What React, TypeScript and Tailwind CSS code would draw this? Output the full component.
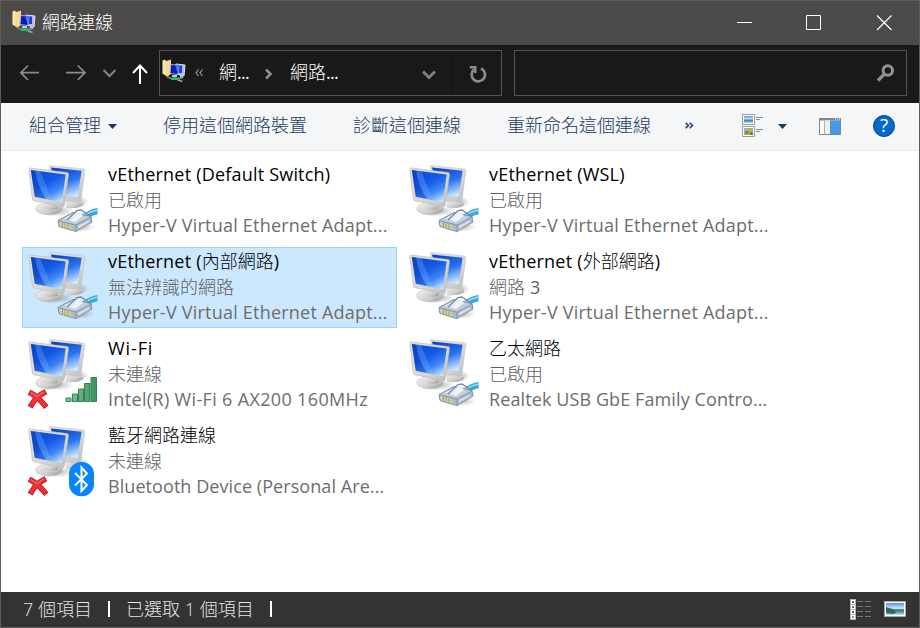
import type { ReactNode } from "react";

type Kind = "ethernet" | "wifi" | "bluetooth";

type Connection = {
  name: ReactNode;
  status: ReactNode;
  device: string;
  spacing: string;
  kind: Kind;
  selected?: boolean;
};

const adapter = "Hyper-V Virtual Ethernet Adapt...";

function Latin({ children, spacing = "tracking-[0.2px]" }: { children: ReactNode; spacing?: string }) {
  return <span className={`font-normal ${spacing}`}>{children}</span>;
}

const connections: Connection[] = [
  { name: <Latin>vEthernet (Default Switch)</Latin>, status: "已啟用", device: adapter, spacing: "tracking-[0.220px]", kind: "ethernet" },
  { name: <Latin>vEthernet (WSL)</Latin>, status: "已啟用", device: adapter, spacing: "tracking-[0.220px]", kind: "ethernet" },
  { name: <><Latin>vEthernet (</Latin>內部網路<Latin>)</Latin></>, status: "無法辨識的網路", device: adapter, spacing: "tracking-[0.220px]", kind: "ethernet", selected: true },
  { name: <><Latin>vEthernet (</Latin>外部網路<Latin>)</Latin></>, status: <>網路<Latin> 3</Latin></>, device: adapter, spacing: "tracking-[0.220px]", kind: "ethernet" },
  { name: <Latin spacing="tracking-[0.900px]">Wi-Fi</Latin>, status: "未連線", device: "Intel(R) Wi-Fi 6 AX200 160MHz", spacing: "tracking-[0.340px]", kind: "wifi" },
  { name: "乙太網路", status: "已啟用", device: "Realtek USB GbE Family Contro...", spacing: "tracking-[0.1px]", kind: "ethernet" },
  { name: "藍牙網路連線", status: "未連線", device: "Bluetooth Device (Personal Are...", spacing: "tracking-[0.070px]", kind: "bluetooth" },
];

function Gradients() {
  return (
    <svg className="absolute h-0 w-0" aria-hidden>
      <defs>
        <linearGradient id="screen" x1="0.2" y1="0" x2="0.8" y2="1">
          <stop offset="0" stopColor="#0d4ad0" />
          <stop offset="0.4" stopColor="#1559e6" />
          <stop offset="0.7" stopColor="#3f86f5" />
          <stop offset="1" stopColor="#c4e4ff" />
        </linearGradient>
        <linearGradient id="screenBack" x1="0.3" y1="0" x2="0.7" y2="1">
          <stop offset="0" stopColor="#0b45cc" />
          <stop offset="0.5" stopColor="#2b72ee" />
          <stop offset="1" stopColor="#d3ecff" />
        </linearGradient>
        <linearGradient id="frame" x1="0" y1="0" x2="1" y2="1">
          <stop offset="0" stopColor="#e2e2dd" />
          <stop offset="0.6" stopColor="#d8d9d6" />
          <stop offset="1" stopColor="#bcbebc" />
        </linearGradient>
        <linearGradient id="base" x1="0" y1="0" x2="1" y2="1">
          <stop offset="0" stopColor="#f4f4f2" />
          <stop offset="0.6" stopColor="#cfcfcd" />
          <stop offset="1" stopColor="#8e8e8e" />
        </linearGradient>
        <linearGradient id="bars" x1="0" y1="0" x2="1" y2="0">
          <stop offset="0" stopColor="#8ccaa0" />
          <stop offset="1" stopColor="#3a9462" />
        </linearGradient>
        <linearGradient id="sky" x1="0" y1="0" x2="0" y2="1">
          <stop offset="0" stopColor="#4e8fea" />
          <stop offset="0.45" stopColor="#d7edf8" />
          <stop offset="0.55" stopColor="#467f68" />
          <stop offset="0.75" stopColor="#5592bb" />
          <stop offset="1" stopColor="#cde8f5" />
        </linearGradient>
        <linearGradient id="folder" x1="0" y1="0" x2="1" y2="0">
          <stop offset="0" stopColor="#fff3b5" />
          <stop offset="1" stopColor="#dfba62" />
        </linearGradient>
        <radialGradient id="shade">
          <stop offset="0" stopColor="#555" stopOpacity="0.45" />
          <stop offset="1" stopColor="#555" stopOpacity="0" />
        </radialGradient>
      </defs>
    </svg>
  );
}

function Monitors() {
  return (
    <>
      <ellipse cx="50" cy="37" rx="12" ry="6" fill="url(#shade)" />
      <ellipse cx="29" cy="46" rx="18" ry="5.5" fill="url(#shade)" />
      <path d="M38 34h14l1 3q4 1 3 3-5 4-17 3z" fill="url(#base)" />
      <path d="M22.5.5 56.200 3.900q1.800.200 1.600 2L53.900 35.600q-.300 1.800-2 1.600L25 34.500z" fill="url(#frame)" stroke="#c4c6c4" strokeWidth=".6" />
      <path d="M24 2.400 54.600 5.800 50.600 32 30 29z" fill="url(#screenBack)" />
      <ellipse cx="22" cy="43.800" rx="13.300" ry="6" fill="url(#base)" stroke="#b5b5b3" strokeWidth=".5" />
      <path d="M15 36.500h17l-1.200 7.200q-7 2.200-14 0z" fill="url(#base)" />
      <path d="M3.200 3 40 7.600q1.700.200 1.500 1.800l-4.300 30.800q-.300 1.800-2 1.500L7.200 35.800q-1.600-.300-1.800-1.800L1.800 4.800q-.200-1.900 1.400-1.800z" fill="url(#frame)" stroke="#bbbdbb" strokeWidth=".7" />
      <path d="M3.800 5 38.700 9.400 34.900 37.200 7.800 31.800z" fill="url(#screen)" />
      <path d="M3.800 5 8 5.500Q10 20 19 34L7.800 31.800z" fill="#0636ab" opacity=".3" />
      <path d="M8 5.500 13 6.100 25 35.200 19 34Q10 20 8 5.500z" fill="#7eb9ff" opacity=".3" />
    </>
  );
}

function Plug() {
  return (
    <>
      <ellipse cx="51" cy="62" rx="17" ry="5" fill="url(#shade)" />
      <path d="M55 50q8-6 15.500-7v6.500q-6 .500-10 4.500z" fill="#35abd8" />
      <path d="M57 50.500q6-4 13.500-5.500" stroke="#9addf4" strokeWidth="1.600" fill="none" />
      <path d="M31 55.500 46 47.500 64 51.500 65 57 49 66.500 32 61.500z" fill="#c3cedc" stroke="#7a8da3" />
      <path d="M31.500 55.800 49 60 64 52v5L49 66z" fill="#aabacb" />
      <path d="M31.500 55.800 49 60 64 52M49 60v6" stroke="#7d90a6" strokeWidth=".9" fill="none" />
      <path d="M37 53.500 44 55 57 48.500 51 47z" fill="#e3eaf2" />
      <path d="M40 55 50 45.500 54 45 63 51" stroke="#7589a1" strokeWidth="1.300" fill="none" />
      <path d="M43 55.500 52 47.500 56 51 48 57z" fill="#eef3f8" />
      <path d="M33.500 57.500 44 60v4.500L33.500 61.500z" fill="#d2d18d" />
      <path d="M35.500 58v4M38 58.700v4M41 59.400v4.300" stroke="#9c9e68" strokeWidth=".9" />
      <path d="M51 61 62 55.300v1.800L51 63.300z" fill="#dce5ee" />
    </>
  );
}

function RedCross() {
  return (
    <>
      <path d="M4.500 65.800Q9 58 16.500 54M4.500 54.500Q11 58 17.500 66" stroke="#c91722" strokeWidth="5.600" strokeLinecap="square" />
      <path d="M4.500 65.800Q9 58 16.500 54M4.500 54.500Q11 58 17.500 66" stroke="#ea3238" strokeWidth="4" strokeLinecap="square" />
      <path d="M3.500 53.500 10 57.500 16.500 52.800" stroke="#f87c78" strokeWidth="1" />
    </>
  );
}

function ConnectionIcon({ kind }: { kind: Kind }) {
  return (
    <svg viewBox="0 0 72 72" className="mt-1 h-[72px] w-[72px] shrink-0" fill="none">
      <Monitors />
      {kind === "ethernet" && <Plug />}
      {kind !== "ethernet" && <RedCross />}
      {kind === "wifi" && (
        <path d="M39 59h5v3.500h-5zM45.500 55h5v7.500h-5zM51.500 50h5v12.500h-5zM57.500 44.500h5.500v18h-5.500zM64 38.500h5.500v24H64z" fill="url(#bars)" stroke="#2f8254" />
      )}
      {kind === "bluetooth" && (
        <>
          <rect x="42" y="36" width="25" height="34.200" rx="12" fill="#0a84fc" />
          <path d="M48 47 60 59 54.500 65V41.500L60 47.500 48 59.500" stroke="#fff" strokeWidth="2" />
        </>
      )}
    </svg>
  );
}

function FolderNetworkIcon() {
  return (
    <svg viewBox="0 0 24 24" className="h-6 w-6 shrink-0" fill="none">
      <path d="M14 5 23 6 22 17 14 15z" fill="#aebbe6" stroke="#dce0e8" />
      <path d="M14.500 6 20 6.500 20 14h-5z" fill="#2140d0" />
      <path d="M.5 1.500 3 .500l1 1.500L9 .500v14L5 17.500 .500 14.500z" fill="url(#folder)" />
      <path d="M4 3 9 1v14l-4 2.500z" fill="#f3dc98" />
      <path d="M8.800 5.500 17 6 16 15.500 8 14.500z" fill="#0c1cb9" stroke="#b9c3dc" strokeWidth=".8" />
      <path d="m13 6 4 .500-1 8.500z" fill="#4a78e8" />
      <path d="M10 16h5v2h-5zM18 16h3v3h-3z" fill="#c0c6cd" />
      <path d="M4.500 17.500 11 20 20 19" stroke="#7d8585" strokeWidth="1.800" />
      <path d="m9 19 4-1 3.500 1.500v2l-3-.500-4.500 0z" fill="#19c468" />
      <path d="m16 21 4.500 1.500" stroke="#9da6a4" strokeWidth="1.500" />
    </svg>
  );
}

function CaretDown() {
  return <svg viewBox="0 0 9 5" className="h-[5px] w-[9px]"><path d="M0 0h9L4.500 5z" fill="#1e395b" /></svg>;
}

function TitleBar() {
  return (
    <div className="flex h-11 shrink-0 items-center bg-[#4c4a48] pl-[11px] text-white">
      <div className="mb-0.5"><FolderNetworkIcon /></div>
      <span className="mb-0.5 ml-1.5 grow text-[17.800px]">網路連線</span>
      <svg viewBox="0 0 16 16" className="mr-[53px] h-4 w-4" stroke="#fff" fill="none"><path d="M1 7.500h15" /></svg>
      <svg viewBox="0 0 16 16" className="mr-[55px] h-4 w-4" stroke="#fff" fill="none"><path d="M1.500.500h14v14h-14z" /></svg>
      <svg viewBox="0 0 16 16" className="mr-[27px] h-4 w-4" stroke="#fff" strokeWidth="1.200" fill="none"><path d="m1 .500 14.500 14.500M15.500.500 1 15" /></svg>
    </div>
  );
}

function AddressBar() {
  return (
    <div className="flex h-[58px] shrink-0 items-start bg-[#191919] pt-[5px] text-[18px] text-white">
      <svg viewBox="0 0 158 46" className="h-[46px] w-[158px] shrink-0" fill="none">
        <path d="M38 22.700H20M27 15.500 19.800 22.700 27 30" stroke="#8b8b8b" strokeWidth="1.700" />
        <path d="M65 22.700h18.500M76.700 15.500 84 22.700 76.700 30" stroke="#8b8b8b" strokeWidth="1.700" />
        <path d="m102.500 20 6 6 6-6" stroke="#868686" strokeWidth="2" />
        <path d="M139 34V16M132 23l7-7.500 7 7.500" stroke="#fff" strokeWidth="2" />
      </svg>
      <div className="flex h-[46px] w-[343px] shrink-0 items-center border border-[#535353] pl-0.5">
        <div className="mb-1 shrink-0"><FolderNetworkIcon /></div>
        <svg viewBox="0 0 8 8" className="ml-[9px] h-2 w-2 shrink-0" stroke="#969696" fill="none"><path d="M3.500.500 1 3.800l2.500 3.300M7.500.500 5 3.800l2.500 3.300" strokeWidth="1.200" /></svg>
        <span className="mb-0.5 ml-4 w-[30px] shrink-0 whitespace-nowrap">網<Latin spacing="tracking-[-0.700px]">...</Latin></span>
        <svg viewBox="0 0 8 12" className="ml-4 mt-px h-3 w-2 shrink-0" stroke="#8c8c8c" strokeWidth="2.600" fill="none"><path d="m1 1.500 4.500 4.500L1 10.500" /></svg>
        <span className="mb-0.5 ml-[17px] w-12 shrink-0 whitespace-nowrap">網路<Latin spacing="tracking-[-0.700px]">...</Latin></span>
        <svg viewBox="0 0 14 10" className="ml-[84px] mt-1 h-2.5 w-3.5 shrink-0" stroke="#7f7f7f" strokeWidth="3" fill="none"><path d="m1 1.500 6 6 6-6" /></svg>
        <div className="ml-4 h-11 w-px bg-[#141414]" />
        <svg viewBox="0 0 18 18" className="ml-4 mt-0.5 h-[18px] w-[18px] shrink-0" stroke="#8d8d8d" fill="none"><path d="M5 4.500A6.700 6.700 0 1 0 12 3.500" strokeWidth="2.700" /><path d="M.8 2.200h5.500V8" strokeWidth="2.400" /></svg>
      </div>
      <div className="ml-3 flex h-[46px] w-[393px] items-center justify-end border border-[#535353] pr-3">
        <svg viewBox="0 0 18 18" className="h-[18px] w-[18px]" stroke="#929292" fill="none"><circle cx="11.800" cy="6.500" r="4.700" strokeWidth="3" /><path d="m8.500 10-6.500 6.500" strokeWidth="3.200" /></svg>
      </div>
    </div>
  );
}

function CommandBar() {
  return (
    <div className="flex h-12 shrink-0 items-center border-b border-[#e5e6e8] bg-[#f5f6f8] pb-0.5 pl-7 text-[18px] whitespace-nowrap text-[#1e395b]">
      <span className="w-[72px]">組合管理</span>
      <div className="ml-[7px] flex pt-px"><CaretDown /></div>
      <span className="ml-[46px] w-36">停用這個網路裝置</span>
      <span className="ml-[46px] w-[108px]">診斷這個連線</span>
      <span className="ml-[46px] w-36">重新命名這個連線</span>
      <svg viewBox="0 0 9 7" className="ml-[34px] h-[7px] w-[9px]" fill="none" stroke="#1e395b" strokeWidth="1.500"><path d="m.700.700 2.800 2.800L.700 6.300M4.700.700l2.800 2.800-2.800 2.800" /></svg>
      <svg viewBox="0 0 22 24" className="ml-12 h-6 w-[22px]" fill="none">
        <path d="M.5.500h12v10H.500zM.500 12.500h12v10H.500z" fill="#fff" stroke="#9b9b9b" />
        <path d="M2 2h9v7H2z" fill="url(#sky)" />
        <path d="M2 14h9v7H2z" fill="#8dbb61" /><path d="M2 14h5v3H2z" fill="#7cb9e8" />
        <circle cx="8" cy="16" r="1.800" fill="#e9a739" /><circle cx="5" cy="18.500" r="1.600" fill="#d65436" /><circle cx="9.500" cy="19.500" r="1.500" fill="#3d8749" />
        <path d="M14 3.500h7M14 5.500h4M14 15.500h7M14 17.500h4" stroke="#8a8d91" />
      </svg>
      <div className="ml-[14px] flex pt-px"><CaretDown /></div>
      <svg viewBox="0 0 22 18" className="ml-8 mt-0.5 h-[18px] w-[22px]" fill="none">
        <path d="M.5.500h21v16H.500z" fill="#fff" stroke="#858585" /><path d="M0 0h22v2.500H0z" fill="#858585" />
        <path d="M16 1h1M18 1h1M20 1h1" stroke="#fff" />
        <path d="M5.500 2.500V16" stroke="#b0b0b0" /><path d="M6 2.500h5V16H6z" fill="#eef1f3" />
        <path d="M12 2.500h9V16h-9z" fill="#429be8" /><path d="M11.500 2.500V16" stroke="#7a8a99" />
      </svg>
      <div className="ml-8 flex h-[22px] w-[22px] items-center justify-center rounded-full border border-[#064782] bg-[#0369cb] text-[19px] leading-none font-normal text-white">?</div>
    </div>
  );
}

function ConnectionTile({ item }: { item: Connection }) {
  return (
    <div className={`flex h-[81px] w-[375px] border pl-1 ${item.selected ? "border-[#99d1ff] bg-[#cce8ff]" : "border-transparent"}`}>
      <ConnectionIcon kind={item.kind} />
      <div className="ml-[9px] flex flex-col pt-px text-[18px] leading-[25.500px] whitespace-nowrap text-[#6d6d6d]">
        <div className="text-black">{item.name}</div>
        <div className="text-[#606060]">{item.status}</div>
        <div><Latin spacing={item.spacing}>{item.device}</Latin></div>
      </div>
    </div>
  );
}

function StatusBar() {
  return (
    <div className="flex h-[35px] shrink-0 items-center bg-[#333] pb-px pl-[22px] text-[18px] whitespace-nowrap text-[#e4e4e4]">
      <span className="w-[70px]">7 個項目</span>
      <div className="ml-[15px] h-4 w-0.5 bg-white" />
      <span className="ml-4 w-[128px]">已選取 1 個項目</span>
      <div className="ml-4 h-4 w-0.5 bg-white" />
      <svg viewBox="0 0 22 21" className="ml-auto h-[21px] w-[22px]" fill="none">
        <path d="M0 0h6v21H0z" fill="#b5b5b5" />
        <path d="M1 1h4v4H1zM1 6h4v4H1zM1 11h4v4H1zM1 16h4v4H1z" fill="#fff" />
        <path d="M2 2h2v2H2z" fill="#31835d" /><path d="M2 7h2v2H2z" fill="#3c70c8" /><path d="M2 12h2v2H2z" fill="#c5342b" /><path d="M2 17h2v2H2z" fill="#8baa72" />
        <path d="M7 2.500h6M15 2.500h6M7 7.500h6M15 7.500h6M7 12.500h6M15 12.500h6M7 17.500h6M15 17.500h6" stroke="#777" />
      </svg>
      <svg viewBox="0 0 22 16" className="ml-3 mr-[13px] h-4 w-[22px]">
        <path d="M.5.500h21v15H.500z" fill="#fff" stroke="#a9a9a9" /><path d="M2 2h18v12H2z" fill="url(#sky)" />
        <path d="M2 6q6 1 11 5l-4 2-7-1z" fill="#35675a" />
      </svg>
    </div>
  );
}

export default function App() {
  return (
    <div className="flex h-[628px] w-[920px] flex-col overflow-hidden border border-[#5d5d5c] bg-white font-['Open_Sans','Noto_Sans_CJK_TC',sans-serif] font-light">
      <Gradients />
      <TitleBar />
      <AddressBar />
      <CommandBar />
      <main className="grid grow grid-cols-[375px_375px] content-start gap-x-1.5 gap-y-1.5 pt-[9px] pl-[21px]">
        {connections.map((item, i) => <ConnectionTile key={i} item={item} />)}
      </main>
      <StatusBar />
    </div>
  );
}
